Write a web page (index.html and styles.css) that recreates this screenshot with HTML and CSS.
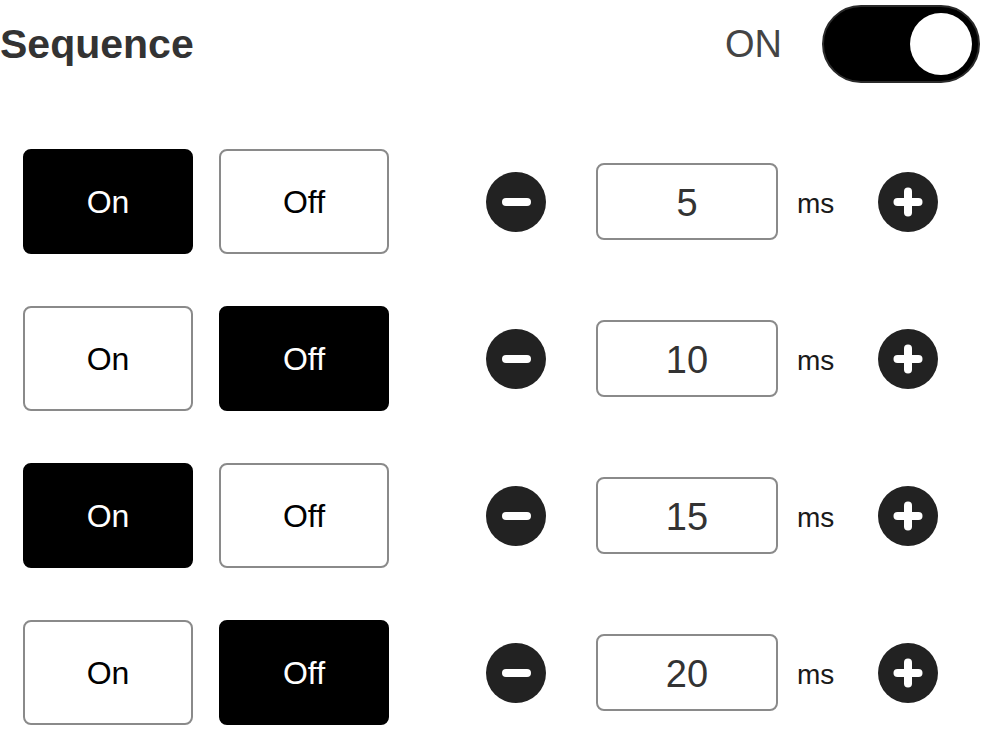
FILE: index.html
```html
<!DOCTYPE html>
<html>
<head>
<meta charset="utf-8">
<link rel="stylesheet" href="styles.css">
</head>
<body>
<div class="page">
  <header class="header">
    <h1 class="title">Sequence</h1>
    <div class="master">
      <span class="master-label">ON</span>
      <div class="toggle"><div class="knob"></div></div>
    </div>
  </header>
  <div class="rows">
    <div class="row">
      <div class="seg-btn active">On</div>
      <div class="seg-btn">Off</div>
      <svg class="step minus" viewBox="0 0 60 60"><circle cx="30" cy="30" r="30"/><line x1="20" y1="30" x2="41" y2="30"/></svg>
      <div class="value">5</div>
      <span class="unit">ms</span>
      <svg class="step plus" viewBox="0 0 60 60"><circle cx="30" cy="30" r="30"/><line x1="19.5" y1="30" x2="40.5" y2="30"/><line x1="30" y1="19.5" x2="30" y2="40.5"/></svg>
    </div>
    <div class="row">
      <div class="seg-btn">On</div>
      <div class="seg-btn active">Off</div>
      <svg class="step minus" viewBox="0 0 60 60"><circle cx="30" cy="30" r="30"/><line x1="20" y1="30" x2="41" y2="30"/></svg>
      <div class="value">10</div>
      <span class="unit">ms</span>
      <svg class="step plus" viewBox="0 0 60 60"><circle cx="30" cy="30" r="30"/><line x1="19.5" y1="30" x2="40.5" y2="30"/><line x1="30" y1="19.5" x2="30" y2="40.5"/></svg>
    </div>
    <div class="row">
      <div class="seg-btn active">On</div>
      <div class="seg-btn">Off</div>
      <svg class="step minus" viewBox="0 0 60 60"><circle cx="30" cy="30" r="30"/><line x1="20" y1="30" x2="41" y2="30"/></svg>
      <div class="value">15</div>
      <span class="unit">ms</span>
      <svg class="step plus" viewBox="0 0 60 60"><circle cx="30" cy="30" r="30"/><line x1="19.5" y1="30" x2="40.5" y2="30"/><line x1="30" y1="19.5" x2="30" y2="40.5"/></svg>
    </div>
    <div class="row">
      <div class="seg-btn">On</div>
      <div class="seg-btn active">Off</div>
      <svg class="step minus" viewBox="0 0 60 60"><circle cx="30" cy="30" r="30"/><line x1="20" y1="30" x2="41" y2="30"/></svg>
      <div class="value">20</div>
      <span class="unit">ms</span>
      <svg class="step plus" viewBox="0 0 60 60"><circle cx="30" cy="30" r="30"/><line x1="19.5" y1="30" x2="40.5" y2="30"/><line x1="30" y1="19.5" x2="30" y2="40.5"/></svg>
    </div>
  </div>
</div>
</body>
</html>
```
FILE: styles.css
```css
* { box-sizing: border-box; }
html, body {
  margin: 0;
  padding: 0;
  background: #ffffff;
  font-family: "Liberation Sans", Arial, sans-serif;
}
.page {
  width: 1000px;
  height: 729px;
  overflow: hidden;
}
.header {
  display: flex;
  align-items: center;
  justify-content: space-between;
  height: 78px;
  margin-top: 5px;
  padding-right: 20px;
}
.title {
  margin: 0;
  font-size: 41px;
  font-weight: bold;
  color: #333333;
  line-height: 1;
}
.master {
  display: flex;
  align-items: center;
  gap: 40px;
}
.master-label {
  font-size: 38px;
  color: #444444;
  line-height: 1;
}
.toggle {
  width: 158px;
  height: 78px;
  border-radius: 39px;
  background: #000000;
  border: 2px solid #2a2a2a;
  display: flex;
  align-items: center;
  justify-content: flex-end;
  padding-right: 6px;
}
.knob {
  width: 62px;
  height: 62px;
  border-radius: 50%;
  background: #ffffff;
}
.rows {
  display: flex;
  flex-direction: column;
  gap: 52px;
  margin-top: 66px;
  padding-left: 23px;
}
.row {
  display: flex;
  align-items: center;
  height: 105px;
}
.seg-btn {
  width: 170px;
  height: 105px;
  border-radius: 8px;
  border: 2px solid #8a8a8a;
  background: #ffffff;
  color: #000000;
  font-size: 32px;
  padding-top: 2px;
  display: flex;
  align-items: center;
  justify-content: center;
}
.seg-btn + .seg-btn {
  margin-left: 26px;
}
.seg-btn.active {
  background: #000000;
  border-color: #000000;
  color: #ffffff;
}
.step {
  width: 60px;
  height: 60px;
  display: block;
}
.step circle { fill: #222222; }
.step line {
  stroke: #ffffff;
  stroke-width: 8;
  stroke-linecap: round;
}
.minus { margin-left: 97px; }
.value {
  margin-left: 50px;
  width: 182px;
  height: 77px;
  border: 2px solid #8a8a8a;
  border-radius: 8px;
  padding-top: 4px;
  display: flex;
  align-items: center;
  justify-content: center;
  font-size: 38px;
  color: #333333;
}
.unit {
  margin-left: 19px;
  padding-top: 5px;
  font-size: 28px;
  color: #1a1a1a;
}
.plus { margin-left: 44px; }
```
